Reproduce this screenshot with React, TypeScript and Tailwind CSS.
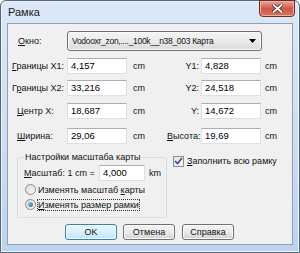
import React from "react";

const font = { fontFamily: '"Liberation Sans", Arial, sans-serif' };

function Field({ value, w = "w-[60px]" }: { value: string; w?: string }) {
  return (
    <div
      className={`${w} h-[16px] shrink-0 border border-[#dbdfe6] border-t-[#abadb3] bg-white pl-[3px] text-[9.5px] leading-[14px] text-black`}
    >
      {value}
    </div>
  );
}

function Btn({ label, primary }: { label: React.ReactNode; primary?: boolean }) {
  return (
    <div
      className={
        primary
          ? "w-[52px] h-[16px] rounded-[3px] border border-[#3c7fb1] bg-gradient-to-b from-[#eaf6fd] via-[#d9f0fc] to-[#bee6fd] flex items-center justify-center shadow-[inset_0_0_0_1px_#f5fbff]"
          : "w-[52px] h-[16px] rounded-[3px] border border-[#707070] bg-gradient-to-b from-[#f2f2f2] via-[#ebebeb] to-[#d2d2d2] flex items-center justify-center shadow-[inset_0_0_0_1px_#fbfbfb]"
      }
    >
      {label}
    </div>
  );
}

function Row({
  left,
  lpad,
  lval,
  right,
  rval,
  mt,
}: {
  left: React.ReactNode;
  lpad: string;
  lval: string;
  right: React.ReactNode;
  rval: string;
  mt: string;
}) {
  return (
    <div className={`flex items-center h-[16px] ${mt}`}>
      <div className={`w-[59px] shrink-0 whitespace-nowrap ${lpad}`}>{left}</div>
      <Field value={lval} />
      <div className="w-[40px] shrink-0 pl-[6px]">cm</div>
      <div className="w-[34px] shrink-0 text-right pr-[2px] whitespace-nowrap">{right}</div>
      <Field value={rval} />
      <div className="pl-[4px]">cm</div>
    </div>
  );
}

export default function App() {
  return (
    <div className="w-[300px] h-[253px] bg-white" style={font}>
      <div className="w-[300px] h-[253px] flex flex-col rounded-t-[6px] border border-[#55657a] bg-gradient-to-b from-[#dce8f6] via-[#cfdff2] to-[#bcd3ee] shadow-[inset_0_0_0_1px_#eef4fb]">
        {/* Title bar */}
        <div className="h-[22px] flex items-start justify-between">
          <div className="pl-[7px] pt-[5px] text-[11px] leading-[13px] text-[#1a1a1a]">Рамка</div>
          <div className="mr-[4px] -mt-[1px] w-[36px] h-[17px] rounded-b-[4px] border border-[#6b2a22] bg-gradient-to-b from-[#e8a799] via-[#cf5a4a] to-[#d8705c] shadow-[inset_0_0_0_1px_#f0b0a4] flex items-center justify-center">
            <svg width="11" height="9" viewBox="0 0 11 9">
              <path
                d="M1.5 1 L9.5 8 M9.5 1 L1.5 8"
                stroke="#5a2a22"
                strokeWidth="3.4"
                strokeLinecap="square"
              />
              <path
                d="M1.5 1 L9.5 8 M9.5 1 L1.5 8"
                stroke="#ffffff"
                strokeWidth="1.8"
                strokeLinecap="square"
              />
            </svg>
          </div>
        </div>

        {/* Client area */}
        <div className="mx-[6px] h-[222px] border border-[#8ba0ba] bg-[#f0f0f0] text-[9px] leading-[12px] text-[#111]">
          {/* Window combo */}
          <div className="flex items-center mt-[7px] h-[20px]">
            <div className="w-[59px] shrink-0 pl-[10px]">
              <u className="decoration-1 underline-offset-[1px]">О</u>кно:
            </div>
            <div className="w-[195px] h-[20px] rounded-[3px] border border-[#707070] bg-gradient-to-b from-[#f4f4f4] via-[#ebebeb] to-[#d9d9d9] shadow-[inset_0_0_0_1px_#fbfbfb] flex items-center justify-between pl-[4px] pr-[5px]">
              <span className="whitespace-nowrap text-[8.5px] tracking-[-0.3px]">Vodooxr_zon,...._100k__n38_003 Карта</span>
              <svg width="7" height="4" viewBox="0 0 7 4">
                <path d="M0 0 H7 L3.5 4 Z" fill="#000" />
              </svg>
            </div>
          </div>

          <Row
            mt="mt-[7px]"
            lpad="pl-[4px]"
            left={
              <>
                <u className="decoration-1 underline-offset-[1px]">Г</u>раницы X1:
              </>
            }
            lval="4,157"
            right="Y1:"
            rval="4,828"
          />
          <Row
            mt="mt-[6px]"
            lpad="pl-[4px]"
            left={
              <>
                Г<u className="decoration-1 underline-offset-[1px]">р</u>аницы X2:
              </>
            }
            lval="33,216"
            right="Y2:"
            rval="24,518"
          />
          <Row
            mt="mt-[7px]"
            lpad="pl-[9px]"
            left={
              <>
                <u className="decoration-1 underline-offset-[1px]">Ц</u>ентр X:
              </>
            }
            lval="18,687"
            right="Y:"
            rval="14,672"
          />
          <Row
            mt="mt-[9px]"
            lpad="pl-[9px]"
            left={
              <>
                <u className="decoration-1 underline-offset-[1px]">Ш</u>ирина:
              </>
            }
            lval="29,06"
            right={
              <>
                <u className="decoration-1 underline-offset-[1px]">В</u>ысота:
              </>
            }
            rval="19,69"
          />

          {/* Scale group + fill checkbox */}
          <div className="flex items-start mt-[7px]">
            <fieldset className="ml-[9px] w-[150px] h-[67px] border border-[#d5dfe5] rounded-[3px] pl-[6px]">
              <legend className="px-[1px] leading-[13px]">Настройки масштаба карты</legend>
              <div className="flex items-center h-[16px] mt-[1px]">
                <div className="w-[75px] shrink-0 whitespace-nowrap">
                  <u className="decoration-1 underline-offset-[1px]">М</u>асштаб: 1 cm =
                </div>
                <Field value="4,000" w="w-[46px]" />
                <div className="pl-[4px]">km</div>
              </div>
              <div className="flex items-center h-[13px] mt-[2px] pl-[1px]">
                <div className="w-[11px] h-[11px] rounded-full border border-[#8a8a8a] bg-gradient-to-br from-[#dcdcdc] to-[#f8f8f8]" />
                <span className="ml-[2px] whitespace-nowrap">
                  Изменять масштаб <u className="decoration-1 underline-offset-[1px]">к</u>арты
                </span>
              </div>
              <div className="flex items-center h-[13px] mt-[2px] pl-[1px]">
                <div className="w-[11px] h-[11px] rounded-full border border-[#8a8a8a] bg-gradient-to-br from-[#dcdcdc] to-[#f8f8f8] flex items-center justify-center">
                  <div className="w-[5px] h-[5px] rounded-full bg-gradient-to-br from-[#8cd0f4] to-[#1e6fa8]" />
                </div>
                <span className="ml-[1px] px-[1px] whitespace-nowrap outline outline-1 outline-dotted outline-[#333] -outline-offset-1">
                  <u className="decoration-1 underline-offset-[1px]">И</u>зменять размер рамки
                </span>
              </div>
            </fieldset>

            <div className="flex items-center ml-[6px] mt-[4px]">
              <div className="w-[11px] h-[11px] border border-[#8e8f8f] bg-gradient-to-br from-[#e2e2e2] to-[#fafafa] flex items-center justify-center">
                <svg width="9" height="8" viewBox="0 0 9 8">
                  <path d="M1 4 L3.5 6.5 L8 1" stroke="#3d4f8a" strokeWidth="1.7" fill="none" />
                </svg>
              </div>
              <span className="ml-[3px] whitespace-nowrap">
                <u className="decoration-1 underline-offset-[1px]">З</u>аполнить всю рамку
              </span>
            </div>
          </div>

          {/* Buttons */}
          <div className="flex items-center mt-[6px] ml-[57px] gap-[6px]">
            <Btn label="OK" primary />
            <Btn label="Отмена" />
            <div className="ml-[1px]">
              <Btn label="Справка" />
            </div>
          </div>
        </div>
      </div>
    </div>
  );
}
